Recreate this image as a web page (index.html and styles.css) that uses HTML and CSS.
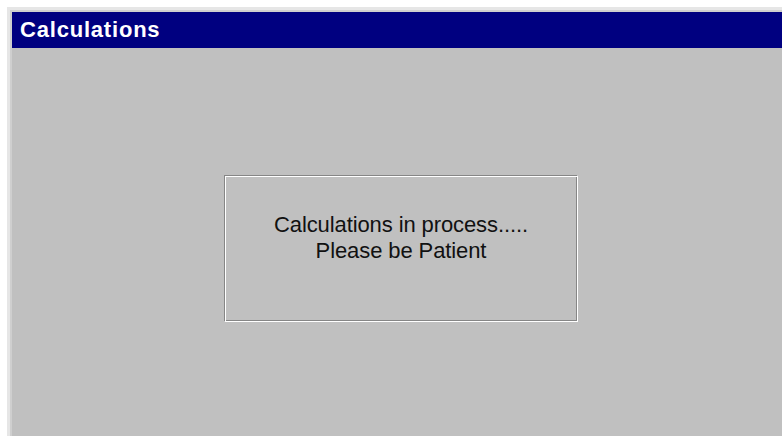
FILE: index.html
```html
<!DOCTYPE html>
<html lang="en">
<head>
<meta charset="utf-8">
<title>Calculations</title>
<link rel="stylesheet" href="styles.css">
</head>
<body>
<div class="window">
  <div class="titlebar">Calculations</div>
  <div class="client">
    <div class="status-panel">
      <div class="status-text">Calculations in process.....</div>
      <div class="status-text">Please be Patient</div>
    </div>
  </div>
</div>
</body>
</html>
```

FILE: styles.css
```css
html, body {
  margin: 0;
  padding: 0;
  background: #ffffff;
  overflow: hidden;
  width: 782px;
  height: 436px;
}

/* outer window frame, runs off the right and bottom edges */
.window {
  margin: 7px 0 0 7px;
  border-top: 3px solid #e6e6e6;
  border-left: 3px solid #e6e6e6;
  height: 440px;
  box-sizing: border-box;
  display: flex;
  flex-direction: column;
  box-shadow: inset 2px 2px 0 #cfcfcf;
  padding: 2px 0 0 2px;
}

.titlebar {
  height: 36px;
  background: #000080;
  color: #ffffff;
  font-family: "Liberation Sans", Arial, sans-serif;
  font-weight: bold;
  font-size: 22px;
  letter-spacing: 0.8px;
  line-height: 36px;
  padding-left: 8px;
  flex: none;
}

.client {
  flex: 1;
  background: #c0c0c0;
  padding: 127px 0 0 212px;
}

/* etched status panel */
.status-panel {
  width: 354px;
  height: 147px;
  box-sizing: border-box;
  border: 1px solid;
  border-color: #868686 #ffffff #ffffff #868686;
  box-shadow: inset 1px 1px 0 #ffffff, inset -1px -1px 0 #868686;
  padding-top: 36px;
  text-align: center;
  font-family: "Liberation Sans", Arial, sans-serif;
  font-size: 22px;
  line-height: 26px;
  color: #111111;
}

.status-text {
  letter-spacing: -0.1px;
}
```
